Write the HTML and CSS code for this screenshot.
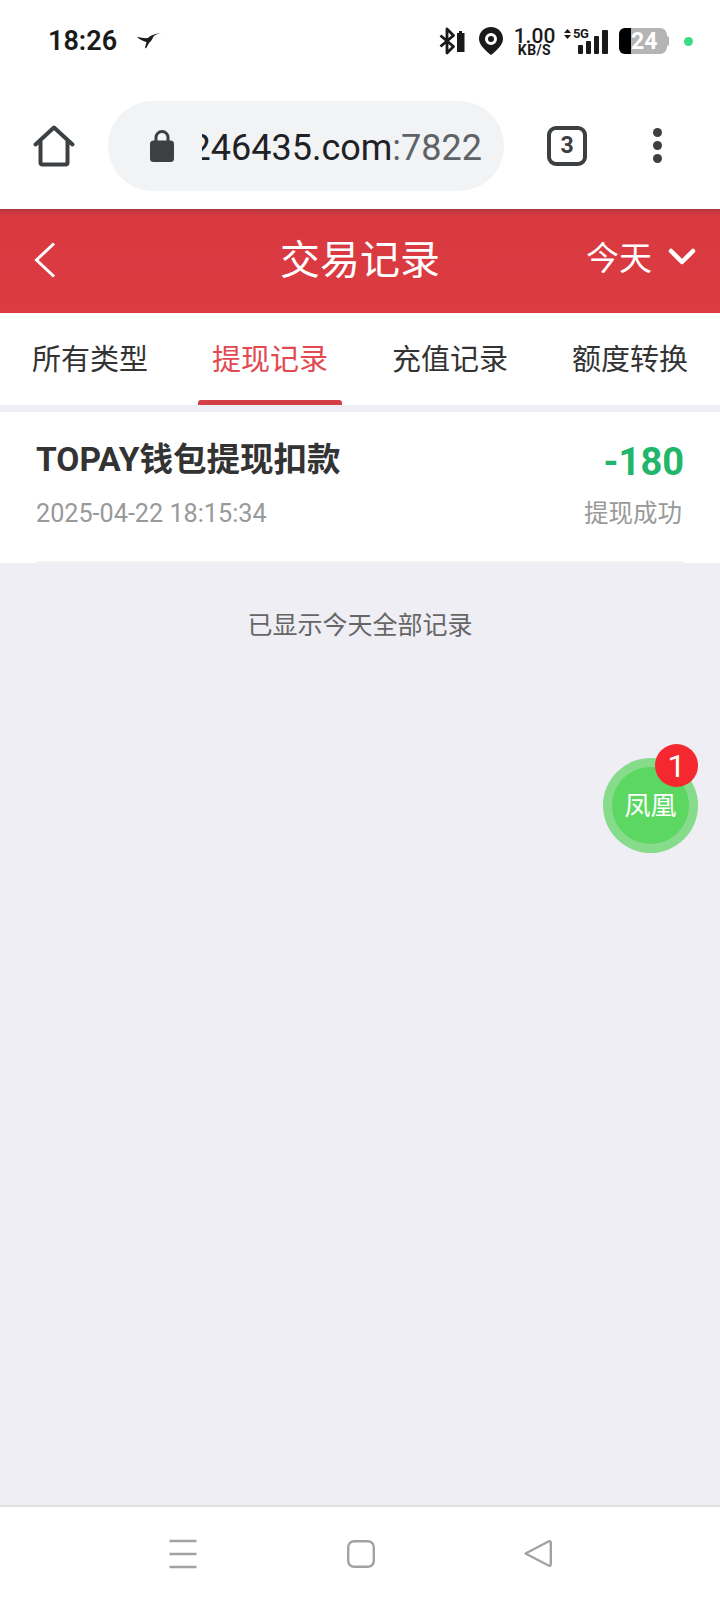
FILE: index.html
```html
<!DOCTYPE html>
<html lang="zh-CN">
<head>
<meta charset="utf-8">
<title>交易记录</title>
<link rel="stylesheet" href="styles.css">
</head>
<body>
<div class="phone">
  <header class="status">
    <div class="status-left">
      <span class="clock">18:26</span>
      <svg class="bird" width="26" height="18" viewBox="0 0 26 18"><path d="M1 5C5 5.500 9 6.500 12 6C14 4 17 2 25 1C20 2.200 18 3.500 17 5.500C16 8 14.500 10 13 11L10 16.500L9 15.500L10.500 10C7 9 3.500 7.500 1 5Z" fill="#1c1c1c"/></svg>
    </div>
    <div class="status-right">
      <svg class="bt" width="28" height="28" viewBox="0 0 28 28"><path d="M1.500 8.500L14.500 19.500L8 26V2L14.500 8.500L1.500 19.500" fill="none" stroke="#1a1a1a" stroke-width="2.800" stroke-linejoin="round"/><path d="M18 6h2V4h3v2h2.500v19H18z" fill="#1a1a1a"/></svg>
      <svg class="pin" width="24" height="28" viewBox="0 0 24 28"><path fill-rule="evenodd" d="M12 0C5 0 0 5 0 12C0 18 7 24 12 28C17 24 24 18 24 12C24 5 19 0 12 0ZM12 6A6 6 0 1 1 12 18A6 6 0 1 1 12 6ZM12 9A3 3 0 1 0 12 15A3 3 0 1 0 12 9Z" fill="#1a1a1a"/></svg>
      <div class="speed"><span class="speed-num">1.00</span><span class="speed-unit">KB/S</span></div>
      <div class="signal">
        <svg class="arrows" width="7" height="10" viewBox="0 0 7 10"><path d="M3.500 0L7 4H0zM3.500 10L0 6H7z" fill="#1a1a1a"/></svg>
        <span class="net">5G</span>
        <div class="bars">
          <i class="bar bar-1"></i><i class="bar bar-2"></i><i class="bar bar-3"></i><i class="bar bar-4"></i>
        </div>
      </div>
      <div class="battery"><span class="battery-fill"></span><span class="battery-num">24</span><span class="battery-nub"></span></div>
      <span class="dot"></span>
    </div>
  </header>

  <nav class="toolbar">
    <svg class="home" width="42" height="42" viewBox="0 0 42 42"><path d="M2.500 19.500L21 2.500L39.500 19.500M7.500 16V37.500A2 2 0 0 0 9.500 39.500H32.500A2 2 0 0 0 34.500 37.500V16" fill="none" stroke="#3c4043" stroke-width="4" stroke-linejoin="round" stroke-linecap="round"/></svg>
    <div class="omnibox">
      <svg class="lock" width="24" height="32" viewBox="0 0 24 32"><path d="M6 12V7.500a6 6 0 0 1 12 0V12" fill="none" stroke="#3c4043" stroke-width="3"/><rect y="10.500" width="24" height="21.500" rx="3.500" fill="#3c4043"/></svg>
      <div class="url"><span class="host">246435.com</span><span class="port">:7822</span></div>
    </div>
    <div class="tab-count">3</div>
    <div class="menu"><i></i><i></i><i></i></div>
  </nav>

  <div class="titlebar">
    <svg class="back" width="22" height="36" viewBox="0 0 22 36"><path d="M20 1.500L2.500 18L20 34.500" fill="none" stroke="#fff" stroke-width="3"/></svg>
    <h1 class="title">交易记录</h1>
    <div class="range">
      <span>今天</span>
      <svg class="range-arrow" width="28" height="18" viewBox="0 0 28 18"><path d="M3 3L14 14L25 3" fill="none" stroke="#fff" stroke-width="4.500" stroke-linecap="round" stroke-linejoin="round"/></svg>
    </div>
  </div>

  <div class="tabs">
    <div class="tab">所有类型</div>
    <div class="tab tab-on">提现记录</div>
    <div class="tab">充值记录</div>
    <div class="tab">额度转换</div>
  </div>

  <main class="content">
    <article class="record">
      <div class="record-body">
        <div class="record-col">
          <div class="record-name">TOPAY钱包提现扣款</div>
          <div class="record-time">2025-04-22 18:15:34</div>
        </div>
        <div class="record-col record-col-end">
          <div class="record-amount">-180</div>
          <div class="record-state">提现成功</div>
        </div>
      </div>
    </article>
    <p class="end-note">已显示今天全部记录</p>
    <div class="float-btn">
      <div class="float-inner">凤凰</div>
      <span class="float-badge">1</span>
    </div>
  </main>

  <footer class="navbar">
    <svg width="30" height="30" viewBox="0 0 30 30"><path d="M1.500 2H28.500M1.500 15H28.500M1.500 28H28.500" stroke="#a2a2a2" stroke-width="2.400"/></svg>
    <svg width="30" height="30" viewBox="0 0 30 30"><rect x="2.200" y="2.200" width="25.600" height="25.600" rx="6" fill="none" stroke="#a2a2a2" stroke-width="2.400"/></svg>
    <svg width="30" height="30" viewBox="0 0 30 30"><path d="M1.500 14.500L24.500 2.500Q26.800 1.500 26.800 4V25Q26.800 27.500 24.500 26.500Z" fill="none" stroke="#a2a2a2" stroke-width="2.400" stroke-linejoin="round"/></svg>
  </footer>
</div>
</body>
</html>
```

FILE: styles.css
```css
* { box-sizing: border-box; }

html, body { margin: 0; padding: 0; }

body {
  font-family: Roboto, "Noto Sans CJK SC", sans-serif;
  color: #333;
  background: #eeeef4;
}

.phone {
  width: 720px;
  height: 1604px;
  display: flex;
  flex-direction: column;
  overflow: hidden;
}

/* system status bar */
.status {
  height: 82px;
  flex: none;
  background: #fff;
  display: flex;
  justify-content: space-between;
  align-items: center;
  padding: 0 27px 0 48px;
}

.status-left { display: flex; align-items: center; gap: 19px; }

.clock { font-size: 27px; font-weight: 600; color: #1a1a1a; }

.status-right { display: flex; align-items: center; }

.bt { margin-right: 12px; }
.pin { margin-right: 11px; }

.speed {
  display: flex;
  flex-direction: column;
  align-items: center;
  width: 41px;
  color: #1a1a1a;
  font-weight: 500;
  margin-right: 9px;
}
.speed-num { font-size: 21px; line-height: 18px; }
.speed-unit { font-size: 14px; line-height: 11px; font-weight: 700; letter-spacing: .4px; }

.signal {
  position: relative;
  width: 44px;
  height: 26px;
  margin-right: 11px;
}
.arrows { position: absolute; left: 0; top: 1px; }
.net {
  position: absolute;
  left: 9px;
  top: 0;
  font-size: 13px;
  line-height: 12px;
  font-weight: 700;
  color: #1a1a1a;
  letter-spacing: -.4px;
}
.bars { position: absolute; right: 0; bottom: 0; display: flex; align-items: flex-end; gap: 3px; }
.bar { display: block; width: 5px; background: #1a1a1a; border-radius: 1px; }
.bar-1 { height: 9px; }
.bar-2 { height: 13px; }
.bar-3 { height: 18px; }
.bar-4 { width: 6px; height: 24px; }

.battery {
  position: relative;
  width: 48px;
  height: 26px;
  background: #b4b4b4;
  border-radius: 6px 7px 7px 6px;
  margin-right: 17px;
  display: flex;
  align-items: center;
}
.battery-fill {
  position: absolute;
  left: 0;
  top: 0;
  bottom: 0;
  width: 12px;
  background: #000;
  border-radius: 6px 0 0 6px;
}
.battery-num {
  position: relative;
  margin-left: 12px;
  font-size: 23px;
  font-weight: 700;
  color: #fff;
}
.battery-nub {
  position: absolute;
  right: -2px;
  top: 8px;
  width: 3px;
  height: 10px;
  background: #b4b4b4;
  border-radius: 0 2px 2px 0;
}

.dot { width: 9px; height: 9px; border-radius: 50%; background: #3ddc84; }

/* browser toolbar */
.toolbar {
  height: 127px;
  flex: none;
  background: #fff;
  display: flex;
  align-items: center;
  padding: 0 0 0 33px;
}

.home { flex: none; margin-right: 33px; }

.omnibox {
  width: 396px;
  height: 90px;
  flex: none;
  background: #f1f3f4;
  border-radius: 45px;
  display: flex;
  align-items: center;
  padding: 0 22px 0 42px;
}

.lock { flex: none; margin-right: 28px; }

.url {
  flex: 1;
  min-width: 0;
  display: flex;
  justify-content: flex-end;
  overflow: hidden;
  white-space: nowrap;
  padding-top: 4px;
  font-size: 36px;
}
.host { flex: none; color: #202124; }
.port { flex: none; color: #5f6368; }

.tab-count {
  width: 40px;
  height: 40px;
  flex: none;
  margin-left: 43px;
  border: 4px solid #3c4043;
  border-radius: 9px;
  display: flex;
  align-items: center;
  justify-content: center;
  font-size: 23px;
  font-weight: 700;
  color: #3c4043;
}

.menu {
  flex: none;
  margin-left: 66px;
  display: flex;
  flex-direction: column;
  gap: 4px;
}
.menu i { display: block; width: 9px; height: 9px; border-radius: 50%; background: #3c4043; }

/* page title bar */
.titlebar {
  position: relative;
  height: 104px;
  flex: none;
  background: linear-gradient(#a83a40 0, #c8393f 3px, #d8393f 8px, #dc3b42 100%);
  color: #fff;
  display: flex;
  align-items: center;
  justify-content: center;
}

.title { margin: 0; font-size: 40px; font-weight: 400; line-height: 1; }

.back { position: absolute; left: 34px; top: 33px; }

.range {
  position: absolute;
  right: 24px;
  top: 26px;
  display: flex;
  align-items: center;
  gap: 16px;
  font-size: 33px;
  line-height: 48px;
}

.range-arrow { margin-top: -4px; }

/* category tabs */
.tabs { height: 92px; flex: none; background: #fff; display: flex; }

.tab {
  position: relative;
  flex: 1;
  display: flex;
  align-items: center;
  justify-content: center;
  padding-bottom: 4px;
  font-size: 29px;
  color: #333;
}

.tab-on { color: #e24a4f; }

.tab-on::after {
  content: "";
  position: absolute;
  left: 18px;
  right: 18px;
  bottom: 0;
  height: 5px;
  background: #d43f46;
  border-radius: 3px 3px 0 0;
}

/* record list */
.content { position: relative; flex: 1; padding-top: 7px; }

.record { height: 151px; background: #fff; padding: 0 36px; }

.record-body {
  height: 100%;
  display: flex;
  justify-content: space-between;
  border-bottom: 2px solid #f3f3f6;
  padding-top: 24px;
}

.record-col { display: flex; flex-direction: column; }
.record-col-end { align-items: flex-end; }

.record-name { font-size: 33.500px; font-weight: 700; line-height: 44px; margin-top: 2px; color: #333; }
.record-time { font-size: 25.200px; line-height: 34px; margin-top: 15px; color: #999; }
.record-amount { font-size: 38px; font-weight: 700; line-height: 50px; margin-top: 1px; color: #21b66a; }
.record-state { font-size: 24.500px; line-height: 34px; margin-top: 10px; padding-right: 2px; color: #999; }

.end-note {
  margin: 45px 0 0;
  text-align: center;
  font-size: 25px;
  line-height: 36px;
  color: #666;
}

.float-btn {
  position: absolute;
  left: 603px;
  top: 353px;
  width: 95px;
  height: 95px;
  border-radius: 50%;
  background: #86dc8a;
  display: flex;
  align-items: center;
  justify-content: center;
}

.float-inner {
  width: 77px;
  height: 77px;
  padding-bottom: 4px;
  border-radius: 50%;
  background: #5bd762;
  color: #fff;
  font-size: 26px;
  display: flex;
  align-items: center;
  justify-content: center;
}

.float-badge {
  position: absolute;
  right: 0;
  top: -14px;
  width: 43px;
  height: 43px;
  border-radius: 50%;
  background: #f5282f;
  color: #fff;
  font-size: 32px;
  display: flex;
  align-items: center;
  justify-content: center;
}

/* system navigation bar */
.navbar {
  height: 99px;
  flex: none;
  background: #fff;
  border-top: 2px solid #e0e0e3;
  display: flex;
  align-items: flex-start;
  padding: 32px 0 0 168px;
  gap: 148px;
}
```
